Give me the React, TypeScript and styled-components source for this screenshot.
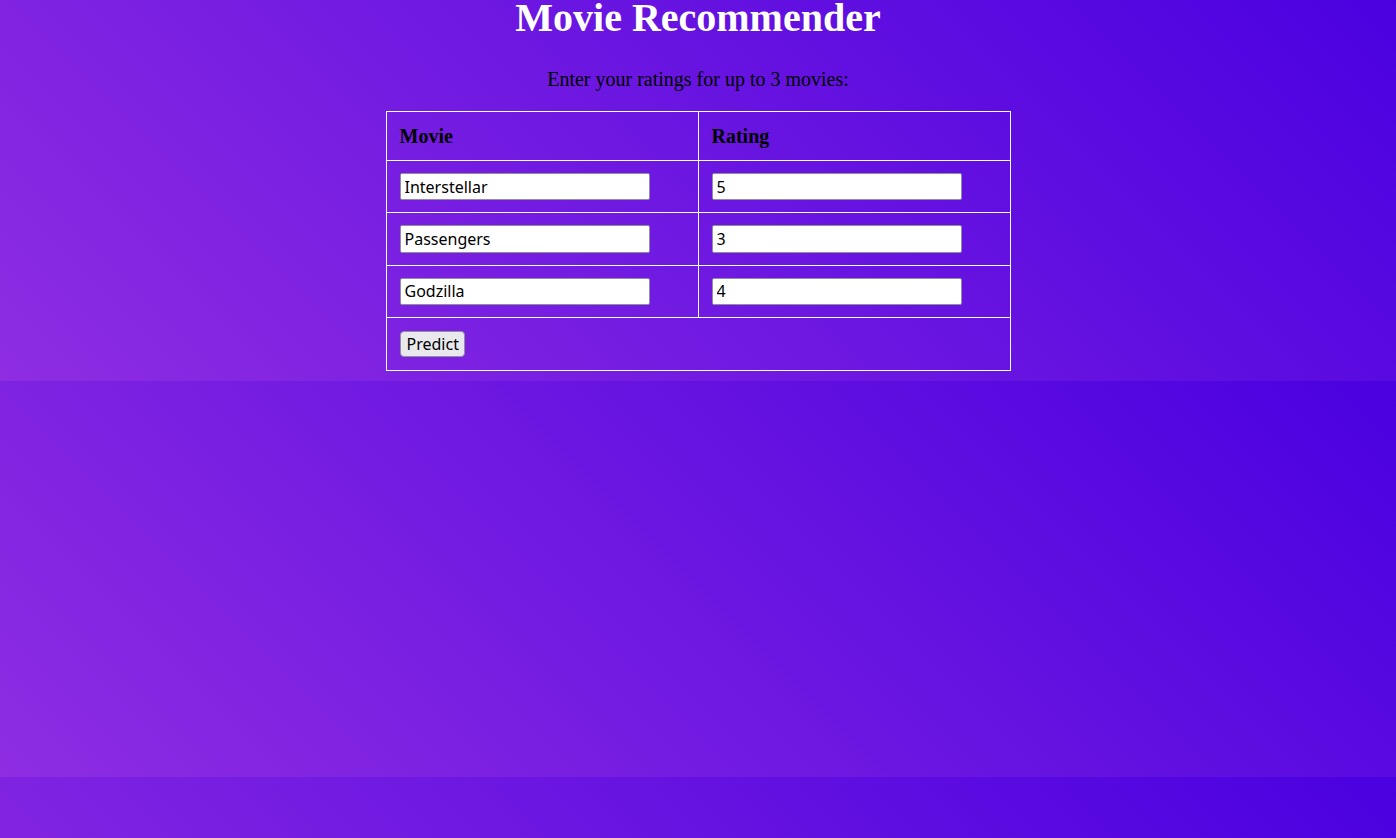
import React from "react";
import styled, { createGlobalStyle } from "styled-components";

const GlobalStyle = createGlobalStyle`
  html {
    min-height: 100%;
    background-color: #6a18e1;
    background-image: linear-gradient(45deg, #8e2de2, #4a00e0);
    background-size: 100% 396px;
    background-position: 0 -15px;
    background-repeat: repeat;
  }
  body {
    margin: 0;
    font-family: "Liberation Serif", "Times New Roman", serif;
    color: #000;
  }
`;

const Page = styled.main`
  display: flex;
  flex-direction: column;
  align-items: center;
`;

const Title = styled.h1`
  margin: -6px 0 0;
  font-size: 40px;
  font-weight: bold;
  line-height: normal;
  color: #ffffff;
  text-align: center;
`;

const Subtitle = styled.p`
  margin: 27px 0 20px;
  font-size: 20px;
  line-height: normal;
  text-align: center;
`;

const Table = styled.table`
  width: 625px;
  border-collapse: collapse;
`;

const HeadCell = styled.th`
  width: 50%;
  border: 1px solid #ffffff;
  padding: 13px 12px 12px 13px;
  text-align: left;
  font-size: 20px;
  font-weight: bold;
  line-height: normal;
  color: #000;
`;

const Cell = styled.td<{ $spacious?: boolean }>`
  border: 1px solid #ffffff;
  padding: ${(p) => (p.$spacious ? "13px 12px 13px 13px" : "12px 12px 12px 13px")};
  vertical-align: middle;
`;

const Field = styled.input`
  display: block;
  box-sizing: border-box;
  width: 250px;
  height: 27.34px;
  margin: 0;
  padding: 1px 3px 1px 4px;
  font-family: "Noto Sans", "DejaVu Sans", sans-serif;
  font-size: 16px;
  color: #000;
  background: #ffffff;
  border: 1px solid #8f8f9d;
  border-radius: 2px;
  outline: none;
`;

const Button = styled.button`
  display: block;
  box-sizing: border-box;
  height: 26px;
  margin: 0;
  padding: 0 5px 0 6px;
  font-family: "Noto Sans", "DejaVu Sans", sans-serif;
  font-size: 16px;
  line-height: 22px;
  color: #000;
  background: #e9e9ed;
  border: 1px solid #8f8f9d;
  border-radius: 4px;
  cursor: pointer;
`;

const rows = [
  { movie: "Interstellar", rating: "5" },
  { movie: "Passengers", rating: "3" },
  { movie: "Godzilla", rating: "4" },
];

export default function App() {
  return (
    <>
      <GlobalStyle />
      <Page>
        <Title>Movie Recommender</Title>
        <Subtitle>Enter your ratings for up to 3 movies:</Subtitle>
        <Table>
          <thead>
            <tr>
              <HeadCell>Movie</HeadCell>
              <HeadCell>Rating</HeadCell>
            </tr>
          </thead>
          <tbody>
            {rows.map((r, i) => (
              <tr key={i}>
                <Cell>
                  <Field type="text" defaultValue={r.movie} />
                </Cell>
                <Cell>
                  <Field type="text" defaultValue={r.rating} />
                </Cell>
              </tr>
            ))}
            <tr>
              <Cell colSpan={2} $spacious>
                <Button type="button">Predict</Button>
              </Cell>
            </tr>
          </tbody>
        </Table>
      </Page>
    </>
  );
}
